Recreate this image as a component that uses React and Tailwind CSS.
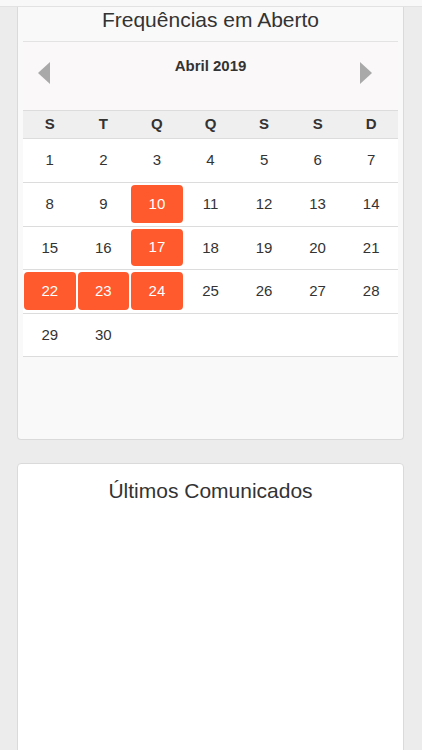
import React from "react";

const rows = [
  { h: "h-[43px]", days: [1, 2, 3, 4, 5, 6, 7] },
  { h: "h-[43px]", days: [8, 9, 10, 11, 12, 13, 14] },
  { h: "h-[42px]", days: [15, 16, 17, 18, 19, 20, 21] },
  { h: "h-[43px]", days: [22, 23, 24, 25, 26, 27, 28] },
  { h: "h-[42px]", days: [29, 30, null, null, null, null, null] },
];

const marked = new Set([10, 17, 22, 23, 24]);

function Arrow({ dir }) {
  return (
    <svg width="12" height="22" viewBox="0 0 12 22" className="block">
      {dir === "left" ? (
        <polygon points="12,0 12,22 0,11" fill="#a9a9a9" />
      ) : (
        <polygon points="0,0 0,22 12,11" fill="#a9a9a9" />
      )}
    </svg>
  );
}

export default function App() {
  return (
    <div className="min-h-[750px] bg-[#ececec] font-['Liberation_Sans',Arial,sans-serif] text-[#333] overflow-hidden">
      <div className="h-[7px] bg-[#f8f8f8] border-b border-[#e2e2e2]" />
      <div className="ml-[17px] mr-[18px]">
        <div className="border border-t-0 border-[#dadada] rounded-b-[4px] bg-[#f9f9f9] px-[5px] pb-[82px]">
          <div className="h-[35px] pt-[1px] text-center text-[21px] leading-[24px] border-b border-[#e3e3e3]">
            Frequências em Aberto
          </div>
          <div className="h-[68px] bg-[#faf8f8] grid grid-cols-[1fr_auto_1fr] items-start px-[15px]">
            <div className="pt-[20px] justify-self-start">
              <Arrow dir="left" />
            </div>
            <div className="pt-[15px] text-[15px] leading-[18px] font-bold">Abril 2019</div>
            <div className="pt-[20px] pr-[11px] justify-self-end">
              <Arrow dir="right" />
            </div>
          </div>
          <div className="grid grid-cols-7 h-[29px] border-y border-[#dcdcdc] bg-[#efefef] items-center text-center text-[15px] font-bold">
            {["S", "T", "Q", "Q", "S", "S", "D"].map((d, i) => (
              <div key={i}>{d}</div>
            ))}
          </div>
          {rows.map((r, ri) => (
            <div
              key={ri}
              className={`grid grid-cols-7 bg-white border-b border-[#dcdcdc] box-content ${r.h}`}
            >
              {r.days.map((d, di) =>
                d === null ? (
                  <div key={di} />
                ) : marked.has(d) ? (
                  <div key={di} className="pt-[2px] pb-[3px] px-[1px]">
                    <div className="h-full rounded-[4px] bg-[#ff5a2e] text-white flex items-center justify-center text-[15px]">
                      {d}
                    </div>
                  </div>
                ) : (
                  <div key={di} className="flex items-center justify-center text-[15px]">
                    {d}
                  </div>
                )
              )}
            </div>
          ))}
        </div>
        <div className="mt-[23px] h-[300px] border border-[#dadada] rounded-t-[4px] bg-white pt-[15px] text-center text-[21px] leading-[24px]">
          Últimos Comunicados
        </div>
      </div>
    </div>
  );
}
